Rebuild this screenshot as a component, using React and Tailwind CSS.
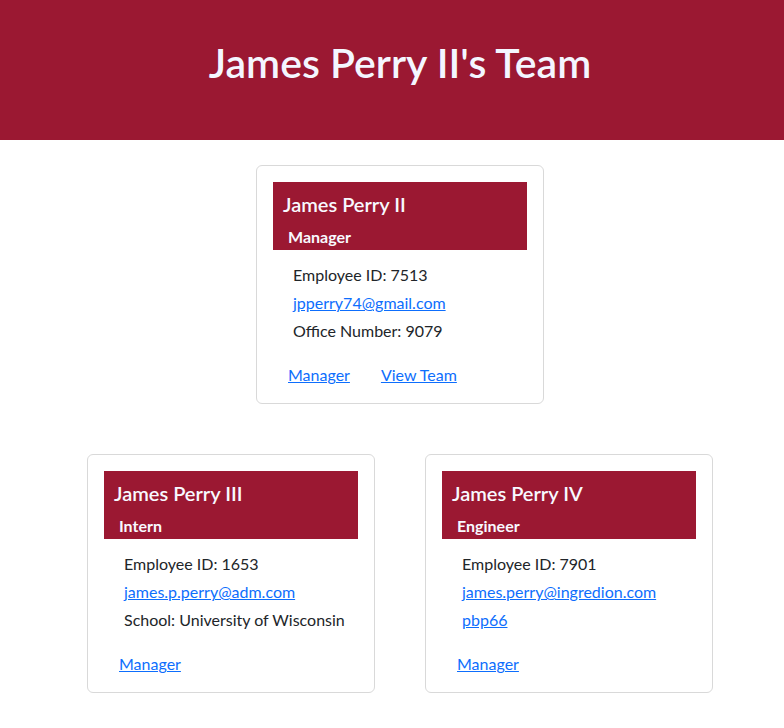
import React from "react";

const team = [
  {
    name: "James Perry III",
    role: "Intern",
    id: "1653",
    email: "james.p.perry@adm.com",
    extra: <p>School: University of Wisconsin</p>,
    links: ["Manager"],
  },
  {
    name: "James Perry IV",
    role: "Engineer",
    id: "7901",
    email: "james.perry@ingredion.com",
    extra: (
      <p>
        <a href="#" className="text-[#0d6efd] underline">
          pbp66
        </a>
      </p>
    ),
    links: ["Manager"],
  },
];

const EmployeeCard = ({ name, role, id, email, extra, links }) => {
  return (
    <div className="w-[288px] bg-white border border-[#d9d9d9] rounded-md p-4">
      {/* title */}
      <div className="bg-[#9b1832] text-[#f8f9ff] h-[68px] px-[10px] pt-[10px]">
        <h5 className="text-xl leading-6 font-semibold">{name}</h5>
        <h6 className="pl-[5px] mt-[11px] text-base leading-5 font-bold">{role}</h6>
      </div>
      {/* info */}
      <div className="pl-5 pt-[11px] text-base leading-7 text-[#212529]">
        <p>Employee ID: {id}</p>
        <p>
          <a href="#" className="text-[#0d6efd] underline">
            {email}
          </a>
        </p>
        {extra}
      </div>
      {/* links */}
      <div className="flex gap-[31px] pl-[15px] mt-[18px] leading-6">
        {links.map((l) => (
          <a key={l} href="#" className="text-[#0d6efd] underline">
            {l}
          </a>
        ))}
      </div>
    </div>
  );
};

const App = () => {
  return (
    <div className="min-h-screen bg-white font-['Lato',sans-serif]">
      <header className="h-[140px] bg-[#9b1832] flex justify-center pl-4 pt-[39px]">
        <h1 className="text-[41px] leading-[48px] font-semibold text-[#f4f6ff]">
          James Perry II's Team
        </h1>
      </header>

      <div className="flex justify-center pl-4 mt-[25px]">
        <EmployeeCard
          name="James Perry II"
          role="Manager"
          id="7513"
          email="jpperry74@gmail.com"
          extra={<p>Office Number: 9079</p>}
          links={["Manager", "View Team"]}
        />
      </div>

      <div className="flex justify-center gap-[50px] pl-4 mt-[50px]">
        {team.map((e) => (
          <EmployeeCard key={e.name} {...e} />
        ))}
      </div>
    </div>
  );
};

export default App;
